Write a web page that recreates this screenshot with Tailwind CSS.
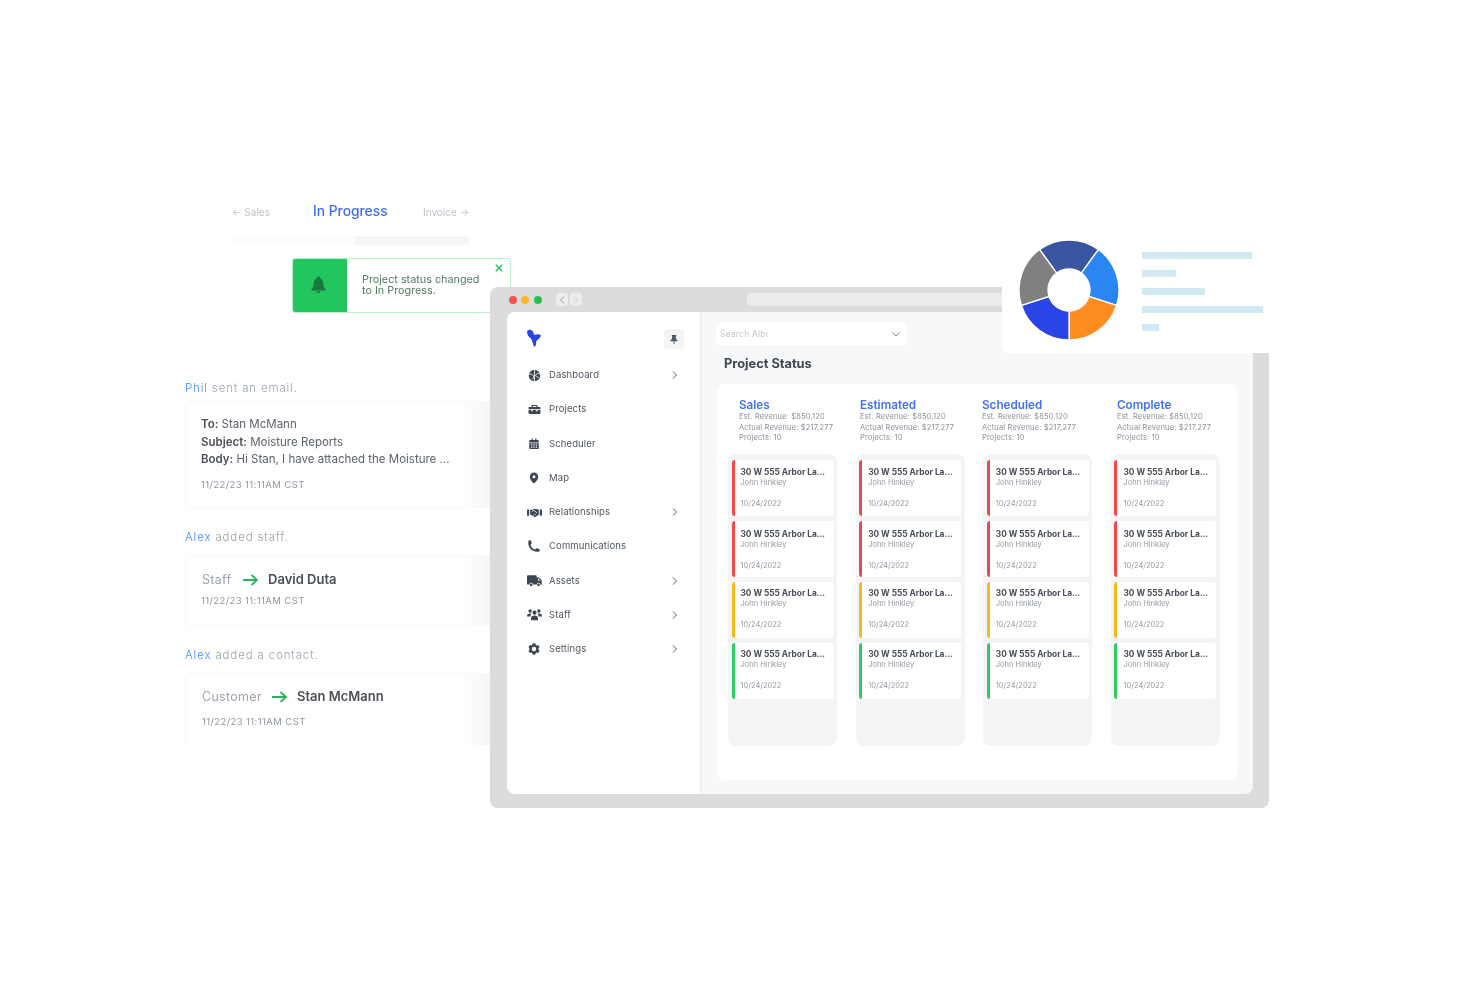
<!DOCTYPE html>
<html lang="en">
<head>
    <meta charset="UTF-8">
    <meta name="viewport" content="width=device-width, initial-scale=1.0">
    <title>Project Status</title>
    <script src="https://cdn.jsdelivr.net/npm/@tailwindcss/browser@4"></script>
</head>
<body class="bg-white font-['Inter',sans-serif]">
    <div class="relative w-[1480px] h-[987px] overflow-hidden bg-white blur-[0.6px]">

        <!-- Status stepper -->
        <div class="absolute left-[232px] top-[203px] w-[238px]">
            <div class="flex items-center h-[18px]">
                <span class="w-[38px] text-[10px] text-[#bfc3ca] whitespace-nowrap">← Sales</span>
                <span class="ml-[43px] w-[75px] -mt-[2px] text-[13.800px] font-medium text-[#3f6ee8] whitespace-nowrap">In Progress</span>
                <span class="ml-[35px] text-[10px] text-[#bfc3ca] whitespace-nowrap">Invoice →</span>
            </div>
            <div class="mt-[15px] h-[9px] rounded-full bg-[#fcfdfd] flex justify-end">
                <div class="w-[115px] h-full rounded-r-full bg-[#f5f6f8]"></div>
            </div>
        </div>

        <!-- Notification -->
        <div class="absolute left-[292px] top-[258px] w-[219px] h-[55px] flex rounded-[3px] border border-[#b9efcb] bg-white overflow-hidden">
            <div class="w-[55px] -ml-px -my-px bg-[#22c55e] flex items-center justify-center">
                <svg class="w-[19px] h-[19px] -mt-[2px] -ml-[2px] text-[#157a3c]" viewBox="0 0 24 24" fill="currentColor"><path d="M12 1.500a2 2 0 0 0-2 2v.6C7 5.100 6 8 6 11c0 3-1.200 5.200-3 7v1.500h18V18c-1.800-1.800-3-4-3-7 0-3-1-5.900-4-6.900v-.6a2 2 0 0 0-2-2Z"/><path d="M9.500 20.500h5a2.500 2.500 0 0 1-5 0Z"/></svg>
            </div>
            <div class="ml-[15px] mt-[14.500px] text-[10.800px] leading-[11.500px] text-[#4e7b60] whitespace-nowrap">Project status changed<br>to In Progress.</div>
            <svg class="absolute right-[7px] top-[5px] w-[8px] h-[8px] text-[#22c55e]" viewBox="0 0 10 10" fill="none" stroke="currentColor" stroke-width="1.800"><path d="M1 1l8 8M9 1l-8 8"/></svg>
        </div>

        <!-- Activity feed -->
        <div class="absolute left-[185px] top-[380px] w-[305px]">
            <p class="h-[14px] text-[11.500px] leading-[16px] tracking-[0.850px] font-light text-[#9ca3af]"><span class="text-[#4a8cf0]">Phil</span> sent an email.</p>
            <div class="mt-[7px] h-[107px] pl-[15px] pt-[14px] rounded-l-md border border-r-0 border-[#f7f8f9] bg-gradient-to-r from-white from-90% to-[#f6f6f6]">
                <div class="text-[11.500px] leading-[17.500px] text-[#5b616b] whitespace-nowrap">
                    <p><b class="font-semibold text-[#4b5058]">To:</b> Stan McMann</p>
                    <p><b class="font-semibold text-[#4b5058]">Subject:</b> Moisture Reports</p>
                    <p><b class="font-semibold text-[#4b5058]">Body:</b> Hi Stan, I have attached the Moisture ...</p>
                </div>
                <p class="mt-[10px] text-[9.500px] leading-[12px] tracking-[0.400px] text-[#9097a0]">11/22/23 11:11AM CST</p>
            </div>
            <p class="mt-[21px] h-[14px] text-[11.500px] leading-[16px] tracking-[0.850px] font-light text-[#9ca3af]"><span class="text-[#4a8cf0]">Alex</span> added staff.</p>
            <div class="mt-[12px] h-[71px] pl-[15px] pt-[16px] rounded-l-md border border-r-0 border-[#f7f8f9] bg-gradient-to-r from-white from-90% to-[#f6f6f6]">
                <div class="flex items-center h-[16px] ml-px">
                    <span class="w-[41px] text-[12.500px] tracking-[0.300px] text-[#9ca3af]">Staff</span>
                    <svg class="w-[15px] h-[12px] text-[#2fb35a]" viewBox="0 0 15 12" fill="none" stroke="currentColor" stroke-width="1.800"><path d="M0 6h14M8.500 1l5.500 5-5.500 5"/></svg>
                    <span class="ml-[10px] text-[13px] font-semibold text-[#4b5058] whitespace-nowrap">David Duta</span>
                </div>
                <p class="mt-[7px] text-[9.500px] leading-[12px] tracking-[0.400px] text-[#9097a0]">11/22/23 11:11AM CST</p>
            </div>
            <p class="mt-[21px] h-[14px] text-[11.500px] leading-[16px] tracking-[0.850px] font-light text-[#9ca3af]"><span class="text-[#4a8cf0]">Alex</span> added a contact.</p>
            <div class="mt-[12px] h-[72px] pl-[16px] pt-[15px] rounded-tl-md border-l border-t border-[#f7f8f9] bg-gradient-to-r from-white from-90% to-[#f6f6f6]">
                <div class="flex items-center h-[16px]">
                    <span class="w-[70px] text-[12.500px] tracking-[0.300px] text-[#9ca3af]">Customer</span>
                    <svg class="w-[15px] h-[12px] text-[#2fb35a]" viewBox="0 0 15 12" fill="none" stroke="currentColor" stroke-width="1.800"><path d="M0 6h14M8.500 1l5.500 5-5.500 5"/></svg>
                    <span class="ml-[10px] text-[13px] font-semibold text-[#4b5058] whitespace-nowrap">Stan McMann</span>
                </div>
                <p class="mt-[11px] text-[9.500px] leading-[12px] tracking-[0.400px] text-[#9097a0]">11/22/23 11:11AM CST</p>
            </div>
        </div>

        <!-- Browser window -->
        <div class="absolute left-[490px] top-[287px] w-[779px] h-[521px] rounded-lg bg-[#dcdcdc] pl-[17px] pr-[16px] pb-[14px] flex flex-col">
            <div class="h-[25px] flex items-center ml-[2px]">
                <span class="w-[8px] h-[8px] rounded-full bg-[#f6504f]"></span>
                <span class="ml-[4px] w-[8px] h-[8px] rounded-full bg-[#fbb829]"></span>
                <span class="ml-[5px] w-[8px] h-[8px] rounded-full bg-[#27c24c]"></span>
                <span class="ml-[14px] w-[12px] h-[13px] rounded-sm bg-[#ececec] flex items-center justify-center">
                    <svg class="w-[6px] h-[8px] text-[#9a9a9a]" viewBox="0 0 6 8" fill="none" stroke="currentColor"><path d="M5 .5L1.500 4 5 7.500"/></svg>
                </span>
                <span class="ml-[2px] w-[12px] h-[13px] rounded-sm bg-[#ececec] flex items-center justify-center">
                    <svg class="w-[6px] h-[8px] text-[#d0d0d0]" viewBox="0 0 6 8" fill="none" stroke="currentColor"><path d="M1 .5L4.500 4 1 7.500"/></svg>
                </span>
                <span class="ml-[165px] w-[300px] h-[13px] rounded-sm bg-[#ececec]"></span>
            </div>

            <div class="flex-1 flex rounded-lg overflow-hidden bg-[#f7f8fa]">
                <!-- Sidebar -->
                <aside class="w-[195px] h-full bg-white border-r-2 border-[#eceef1]">
                    <div class="h-[46px] pt-[18px] pl-[19px] pr-[16px] flex items-start justify-between">
                        <svg class="w-[16px] h-[19px] -mt-[1px]" viewBox="0 0 16 19" fill="#2b44e5"><path d="M1 2.500C2.500 .3 6 .2 7 3l1.500 3C10.500 5 13 5 15 6.200c-.8 2.800-3.300 4.600-4.800 5.800l-.2 4-2 2.300C7 15 6.300 12 5.200 9.800 3 8.500 1 6 1 2.500Z"/></svg>
                        <div class="w-[20px] h-[20px] -mt-px rounded-sm bg-[#f3f4f6] flex items-center justify-center">
                            <svg class="w-[8px] h-[9px] text-[#4b5563]" viewBox="0 0 8 10" fill="currentColor"><path d="M1.500 0h5v1l-.6.600.6 3L8 6v1H4.500v3h-1V7H0V6l1.500-1.400.6-3L1.500 1Z"/></svg>
                        </div>
                    </div>
                    <nav id="nav" class="text-[9.500px] tracking-[0.120px] text-[#4f5661]"></nav>
                </aside>

                <!-- Main -->
                <main class="flex-1">
                    <div class="mt-[11px] ml-[14px] w-[191px] h-[22px] rounded bg-white flex items-center justify-between pl-[4px] pr-[7px]">
                        <span class="text-[8.500px] tracking-[0.200px] text-[#c3c7cd]">Search Albi</span>
                        <svg class="w-[8px] h-[5px] text-[#8a9098]" viewBox="0 0 8 5" fill="none" stroke="currentColor"><path d="M.5.500L4 4 7.500.500"/></svg>
                    </div>
                    <h1 class="mt-[9px] ml-[22px] h-[20px] text-[12.800px] leading-[20px] font-bold text-[#3f4650]">Project Status</h1>
                    <div class="mt-[10px] ml-[15px] w-[520px] h-[396px] rounded-lg bg-white pt-[15px]">
                        <div id="heads" class="flex pl-[22px]"></div>
                        <div id="columns" class="mt-[10.500px] mx-[11px] grid grid-cols-[repeat(4,109px)] gap-x-[18.670px]"></div>
                    </div>
                </main>
            </div>
        </div>

        <!-- Chart card -->
        <div class="absolute left-[1002px] top-[230px] w-[268px] h-[123px] rounded-bl-lg bg-white">
            <svg class="absolute left-[17px] top-[10px] w-[100px] h-[100px]" viewBox="0 0 100 100" stroke="#fff" stroke-width="1.300">
                <path fill="#3a56a0" d="M20.610 9.550A50 50 0 0 1 79.390 9.550L62.340 33.010A21 21 0 0 0 37.660 33.010Z"/>
                <path fill="#2a86f2" d="M79.390 9.550A50 50 0 0 1 97.550 65.450L69.970 56.490A21 21 0 0 0 62.340 33.010Z"/>
                <path fill="#ff8c1e" d="M97.550 65.450A50 50 0 0 1 50 100L50 71A21 21 0 0 0 69.970 56.490Z"/>
                <path fill="#2b44e5" d="M50 100A50 50 0 0 1 2.450 65.450L30.030 56.490A21 21 0 0 0 50 71Z"/>
                <path fill="#808080" d="M2.450 65.450A50 50 0 0 1 20.610 9.550L37.660 33.010A21 21 0 0 0 30.030 56.490Z"/>
            </svg>
            <div class="absolute left-[140px] top-[22px] flex flex-col gap-[11px]">
                <div class="w-[110px] h-[7px] bg-[#d2e9f2]"></div>
                <div class="w-[34px] h-[7px] bg-[#d2e9f2]"></div>
                <div class="w-[63px] h-[7px] bg-[#d2e9f2]"></div>
                <div class="w-[121px] h-[7px] bg-[#d2e9f2]"></div>
                <div class="w-[17px] h-[7px] bg-[#d2e9f2]"></div>
            </div>
        </div>
    </div>

    <script>
        // Sidebar items
        const icons = {
            globe: '<circle cx="12" cy="12" r="10.500"/><path fill="none" stroke="#fff" stroke-width="1.600" d="M12 1.500v21M2 9c3 1 5 0 6 2s3 1 3 3-2 2-2 5M22 9c-3 0-5-2-6 0s-3 2-1 4 3 2 5 3"/>',
            toolbox: '<path fill-rule="evenodd" d="M8 3.500h8a1.500 1.500 0 0 1 1.500 1.500v2.500H22a1.500 1.500 0 0 1 1 1v3H1V9a1.500 1.500 0 0 1 1-1.500h4.500V5A1.500 1.500 0 0 1 8 3.500Zm.8 1.900v2.100h6.400V5.400Z"/><path d="M1 13h5v2h3v-2h6v2h3v-2h5v6a1.500 1.500 0 0 1-1.500 1.500h-19A1.500 1.500 0 0 1 1 19Z"/>',
            calendar: '<path d="M7 1h2.500v3h5V1H17v3h3a1.500 1.500 0 0 1 1.500 1.500V9h-19V5.500A1.500 1.500 0 0 1 4 4h3Z"/><path fill-rule="evenodd" d="M2.500 10.500h19v10A1.500 1.500 0 0 1 20 22H4a1.500 1.500 0 0 1-1.500-1.500ZM6 12.500v2.500h2.500v-2.500Zm4.700 0v2.500h2.600v-2.500Zm4.800 0v2.500H18v-2.500ZM6 17v2.500h2.500V17Zm4.700 0v2.500h2.600V17Zm4.800 0v2.500H18V17Z"/>',
            pin: '<path fill-rule="evenodd" d="M12 1a8.500 8.500 0 0 0-8.500 8.500C3.500 15 9 20.500 12 23c3-2.500 8.500-8 8.500-13.500A8.500 8.500 0 0 0 12 1Zm0 5.500a3 3 0 1 1 0 6 3 3 0 0 1 0-6Z"/>',
            handshake: '<path d="M0 7h3.500v10H0ZM20.500 7H24v10h-3.500Z"/><path d="M5 7.500h4L12 6l3 .5 4 1V15l-1.500 1.500-4 2.500h-2L7 16.500 5 15Z"/><path fill="none" stroke="#fff" stroke-width="1.300" d="M8 11l3-3 5 5M9 16l2 1.500M12 14.500l2.500 2"/>',
            phone: '<path d="M2.250 6.750c0 8.284 6.716 15 15 15h2.250a2.250 2.250 0 0 0 2.250-2.250v-1.372c0-.516-.351-.966-.852-1.091l-4.423-1.106c-.44-.11-.902.055-1.173.417l-.97 1.293c-.282.376-.769.542-1.210.38a12.035 12.035 0 0 1-7.143-7.143c-.162-.441.004-.928.38-1.210l1.293-.97c.363-.271.527-.734.417-1.173L6.963 3.102a1.125 1.125 0 0 0-1.091-.852H4.500A2.250 2.250 0 0 0 2.250 4.500v2.250Z"/>',
            truck: '<path fill-rule="evenodd" d="M0 5a1.500 1.500 0 0 1 1.500-1.500H14A1.500 1.500 0 0 1 15.500 5v2H19l4.500 4.500V17H24v1.500h-2.500a3 3 0 0 0-6 0h-6a3 3 0 0 0-6 0h-2A1.500 1.500 0 0 1 0 17Zm17.500 4v3h4l-3-3Z"/><circle cx="6.500" cy="18.800" r="2.200"/><circle cx="18.500" cy="18.800" r="2.200"/>',
            users: '<circle cx="5" cy="6.500" r="2.800"/><circle cx="19" cy="6.500" r="2.800"/><circle cx="12" cy="9" r="3.300"/><path d="M0 15c0-3 1.500-4.500 4.500-4.500 1 0 1.800.2 2.500.6-1 1-1.500 2.400-1.500 3.900Zm24 0c0-3-1.500-4.500-4.500-4.500-1 0-1.800.2-2.500.6 1 1 1.500 2.400 1.500 3.900ZM6.500 21v-3c0-3 2-4.500 5.500-4.500s5.500 1.500 5.500 4.500v3Z"/>',
            cog: '<path fill-rule="evenodd" d="M11.078 2.250c-.917 0-1.699.663-1.850 1.567L9.050 4.889c-.02.12-.115.26-.297.348a7.493 7.493 0 0 0-.986.57c-.166.115-.334.126-.45.083L6.300 5.508a1.875 1.875 0 0 0-2.282.819l-.922 1.597a1.875 1.875 0 0 0 .432 2.385l.84.692c.095.078.17.229.154.43a7.598 7.598 0 0 0 0 1.139c.015.2-.059.352-.153.43l-.841.692a1.875 1.875 0 0 0-.432 2.385l.922 1.597a1.875 1.875 0 0 0 2.282.818l1.019-.382c.115-.043.283-.031.45.082.312.214.641.405.985.57.182.088.277.228.297.35l.178 1.071c.151.904.933 1.567 1.850 1.567h1.844c.916 0 1.699-.663 1.850-1.567l.178-1.072c.02-.12.114-.26.297-.349.344-.165.673-.356.985-.57.167-.114.335-.125.45-.082l1.020.382a1.875 1.875 0 0 0 2.280-.819l.923-1.597a1.875 1.875 0 0 0-.432-2.385l-.84-.692c-.095-.078-.17-.229-.154-.43a7.614 7.614 0 0 0 0-1.139c-.016-.2.059-.352.153-.43l.84-.692c.708-.582.891-1.590.433-2.385l-.922-1.597a1.875 1.875 0 0 0-2.282-.818l-1.020.382c-.114.043-.282.031-.449-.083a7.490 7.490 0 0 0-.985-.57c-.183-.087-.277-.227-.297-.348l-.179-1.072a1.875 1.875 0 0 0-1.850-1.567h-1.843ZM12 15.750a3.750 3.750 0 1 0 0-7.500 3.750 3.750 0 0 0 0 7.500Z"/>'
        };
        const navItems = [
            ['Dashboard', 'globe', 13, true], ['Projects', 'toolbox', 13, false], ['Scheduler', 'calendar', 12, false],
            ['Map', 'pin', 12, false], ['Relationships', 'handshake', 15, true], ['Communications', 'phone', 14, false],
            ['Assets', 'truck', 15, true], ['Staff', 'users', 15, true], ['Settings', 'cog', 14, true]
        ];
        const chevron = '<svg class="w-[5px] h-[8px] text-[#5b616b]" viewBox="0 0 5 8" fill="none" stroke="currentColor"><path d="M1 .5L4.500 4 1 7.500"/></svg>';
        document.getElementById('nav').innerHTML = navItems.map(([label, icon, size, more]) => `
            <div class="h-[34.250px] flex items-center pl-[18px] pr-[23px]">
                <span class="w-[18px] flex justify-center">
                    <svg style="width:${size}px;height:${size}px" class="text-[#3d4652]" viewBox="0 0 24 24" fill="currentColor">${icons[icon]}</svg>
                </span>
                <span class="ml-[6px] flex-1">${label}</span>
                ${more ? chevron : ''}
            </div>`).join('');

        // Board headers, widths carry the uneven column offsets
        const heads = [['Sales', 'w-[121px]'], ['Estimated', 'w-[122px]'], ['Scheduled', 'w-[135px]'], ['Complete', 'w-[110px]']];
        document.getElementById('heads').innerHTML = heads.map(([name, width]) => `
            <div class="${width} whitespace-nowrap">
                <h2 class="h-[13px] text-[11.700px] leading-[12px] font-semibold text-[#3f72f5]">${name}</h2>
                <div class="text-[7.500px] leading-[10.500px] tracking-[0.150px] text-[#8b9098]">
                    <p>Est. Revenue: $850,120</p>
                    <p>Actual Revenue: $217,277</p>
                    <p>Projects: 10</p>
                </div>
            </div>`).join('');

        // Board columns
        const cards = [['border-[#f2484b]', 'pt-[6px]'], ['border-[#f2484b]', 'pt-[7px]'], ['border-[#f6b81e]', 'pt-[5px]'], ['border-[#2fcb63]', 'pt-[5px]']];
        document.getElementById('columns').innerHTML = heads.map(() => `
            <div class="h-[291.500px] rounded-lg bg-[#f3f4f6] pt-[6px] px-[3.500px] flex flex-col gap-[5px]">
                ${cards.map(([color, pad]) => `
                <div class="h-[56px] rounded-[3px] border-l-[3px] ${color} bg-white pl-[6px] ${pad} whitespace-nowrap">
                    <p class="h-[11px] text-[8.300px] leading-[12px] font-bold text-[#474d57]">30 W 555 Arbor La...</p>
                    <p class="h-[11px] text-[7.500px] leading-[11px] text-[#959aa2]">John Hinkley</p>
                    <p class="mt-[11px] h-[10px] text-[7.500px] leading-[10px] text-[#959aa2]">10/24/2022</p>
                </div>`).join('')}
            </div>`).join('');
    </script>
</body>
</html>
